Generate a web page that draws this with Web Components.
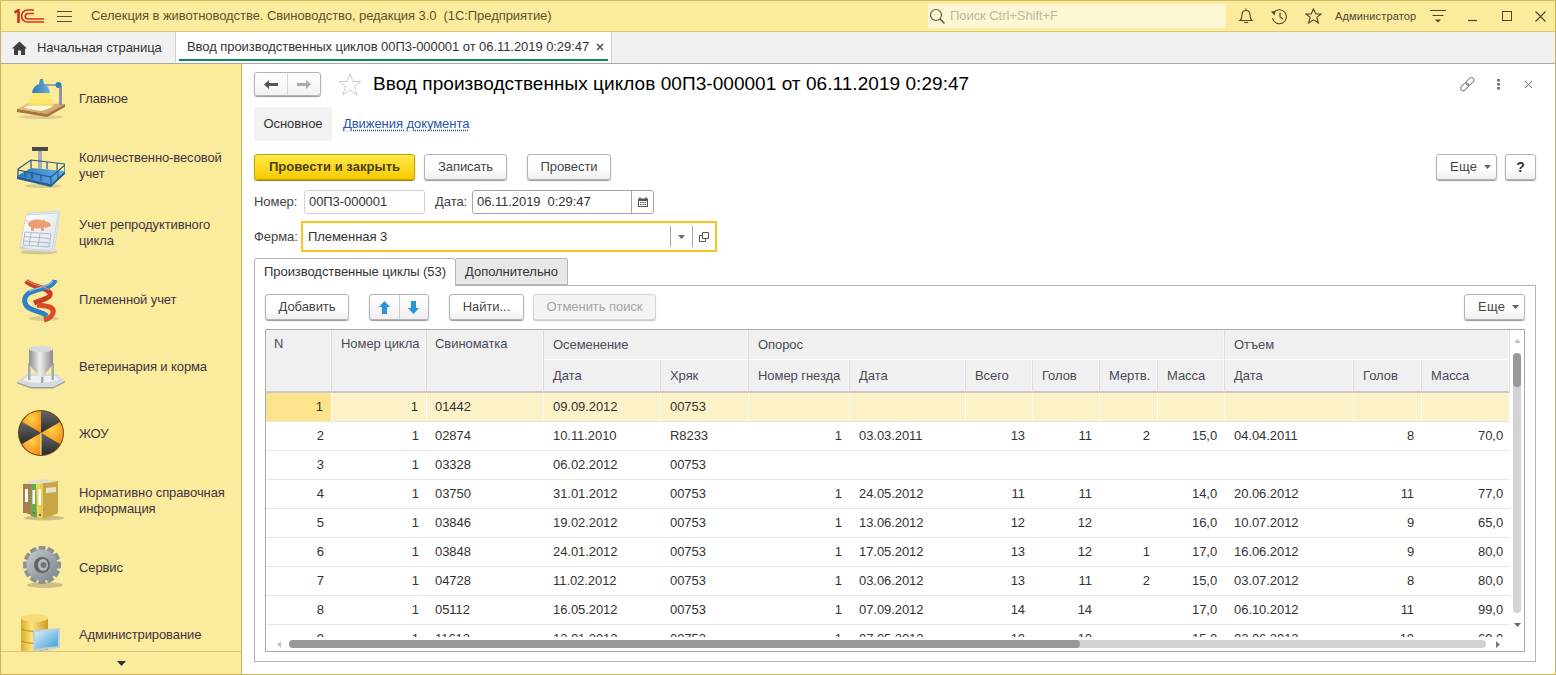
<!DOCTYPE html>
<html lang="ru"><head><meta charset="utf-8"><title>1С</title>
<style>
html,body{margin:0;padding:0;height:100%;overflow:hidden;background:#fff}
body{font:13px/16px "Liberation Sans",Arial,sans-serif;letter-spacing:-.06px;color:#333}
</style></head>
<body>
<onec-app>
  <onec-titlebar slot="top">Селекция в животноводстве. Свиноводство, редакция 3.0  (1С:Предприятие)</onec-titlebar>
  <onec-tabbar slot="top"></onec-tabbar>
  <onec-sidebar slot="side">
    <onec-nav pic="lamp">Главное</onec-nav>
    <onec-nav pic="scale">Количественно-весовой учет</onec-nav>
    <onec-nav pic="doc">Учет репродуктивного цикла</onec-nav>
    <onec-nav pic="dna">Племенной учет</onec-nav>
    <onec-nav pic="silo">Ветеринария и корма</onec-nav>
    <onec-nav pic="hazard">ЖОУ</onec-nav>
    <onec-nav pic="folders">Нормативно справочная информация</onec-nav>
    <onec-nav pic="gear">Сервис</onec-nav>
    <onec-nav pic="db">Администрирование</onec-nav>
  </onec-sidebar>
  <onec-form slot="main"></onec-form>
</onec-app>
<script>
const def=(name,css,html,init)=>customElements.define(name,class extends HTMLElement{
  constructor(){super();const r=this.attachShadow({mode:'open'});r.innerHTML=`<style>${css}</style>${typeof html==='function'?html(this):html}`;}
  connectedCallback(){if(init)init(this);}
});
const PICS={
lamp:`<defs><linearGradient id="a" x1="0" y1="0" x2="1" y2="1"><stop offset="0" stop-color="#e9c48f"/><stop offset="1" stop-color="#c99a60"/></linearGradient><linearGradient id="b" x1="0" x2="1"><stop offset="0" stop-color="#2f78b4"/><stop offset="1" stop-color="#6fb0dc"/></linearGradient></defs>
<ellipse cx="24" cy="42" rx="22" ry="2" fill="#cfc28a" opacity=".7"/><path d="M0 34L11 28L48 29L30 39Z" fill="url(#a)"/><path d="M0 34L30 39L48 29V32L30 42L0 37Z" fill="#a5743f"/><path d="M10 31L32 30.500L36 32L24 36L7 33Z" fill="#fff6dc"/><path d="M16 18H32L37 31H10Z" fill="#ffe761" opacity=".75"/><path d="M27 9H41V11H27Z" fill="#9ba3a8"/><path d="M42 11H45V30H42Z" fill="#8d969c"/><circle cx="41.500" cy="10" r="3" fill="#2f7fb8"/><path d="M15 18Q16 11 22 9L23 4H26L27 9Q32 11 33 18Z" fill="url(#b)"/>`,
scale:`<defs><linearGradient id="c" x1="0" x2="1"><stop offset="0" stop-color="#2a75c0"/><stop offset="1" stop-color="#62aee5"/></linearGradient></defs>
<ellipse cx="26" cy="44" rx="18" ry="2" fill="#d7cb90"/><path d="M15 5H31V9H15Z" fill="#4a4a4a"/><path d="M21 9H25V30H21Z" fill="#aab0b4"/><path d="M0 34L14 26L48 29L34 42Z" fill="url(#c)"/><path d="M0 34L34 42L48 29V32L34 45L0 37Z" fill="#1e5f9e"/><g fill="none" stroke="#27578c" stroke-width="1.200"><path d="M1 34V27L14 18L48 22V29"/><path d="M1 28L34 35L48 23"/><path d="M34 35V42M8 29V35M15 30V37M24 33V39M41 30V36M14 18V26M30 20V27M40 21V28"/></g>`,
doc:`<defs><linearGradient id="d" x1="0" y1="0" x2="1" y2="1"><stop offset="0" stop-color="#fff"/><stop offset="1" stop-color="#dbe2e8"/></linearGradient></defs>
<ellipse cx="22" cy="43" rx="18" ry="2.500" fill="#d3c68b"/><path d="M11 4L43 2L37 43L5 41Z" fill="#e3e9ee" stroke="#c4ced6" stroke-width=".6"/><path d="M9 6L41 4L35 42L3 39Z" fill="url(#d)" stroke="#bcc8d1" stroke-width=".6"/><g fill="#ee9e73"><ellipse cx="20" cy="15" rx="9" ry="4.500"/><path d="M26 10L28 12L33 14L34 17L29 19L25 17Z"/><path d="M14 17H17V22H14ZM24 17H27V22H24Z"/><path d="M11 12L9 10.500L10 13.500Z"/></g><g stroke="#9fb0bd" stroke-width=".8" fill="none"><path d="M8 23L34 25L32 38L6 36ZM7 27.500L33 29.500M6.500 32L32 34M14 24L12 37M23 24.500L21 37.500"/></g><path d="M3 39L9 34L8 41Z" fill="#cdd6dd"/>`,
dna:`<ellipse cx="27" cy="42.500" rx="15" ry="2.500" fill="#d7cb90"/><g fill="none"><path d="M15 9L30 7M12 14L33 14M13 26L32 24M15 31L34 30M20 36L33 36" stroke="#f3e4a2" stroke-width="2"/><path d="M9 5C16 12 28 10 33 17C35 22 24 24 17 27" stroke="#c93c25" stroke-width="5"/><path d="M38 4C36 12 22 12 12 17C5 22 7 30 14 33C20 36 26 36 30 40" stroke="#2f80c6" stroke-width="5"/><path d="M20 29C28 30 38 30 36 37C35 41 31 43 27 44" stroke="#dc4a26" stroke-width="5"/><path d="M36 5C33 11 20 11 12 15.500" stroke="#86c1ec" stroke-width="1.200"/><path d="M10 4.500C16 10 26 9 32 14" stroke="#ea8a62" stroke-width="1"/></g>`,
silo:`<defs><linearGradient id="e" x1="0" x2="1"><stop offset="0" stop-color="#8d8d8d"/><stop offset=".45" stop-color="#efefef"/><stop offset="1" stop-color="#8a8a8a"/></linearGradient></defs>
<path d="M0 39L10 31H40L48 38L36 44H14Z" fill="#d6dadc"/><path d="M0 39L14 44H36L48 38V39.500L36 45.500H14L0 40.500Z" fill="#9aa1a5"/><path d="M6 38Q24 42 42 37L38 33H10Z" fill="#eef0f1"/><path d="M11 20H13.500V37H11ZM34.500 20H37V37H34.500ZM24 30H26.500V40H24Z" fill="#a5abaf"/><path d="M12 21H36L26 34H22Z" fill="url(#e)"/><path d="M12 6V21Q24 24 36 21V6Z" fill="url(#e)"/><ellipse cx="24" cy="6" rx="12" ry="3.200" fill="#d9d9d9"/><path d="M12 21L20 27M36 21L28 27" stroke="#a5abaf" stroke-width=".8"/>`,
hazard:`<defs><radialGradient id="f" cx=".5" cy=".35" r=".7"><stop offset="0" stop-color="#ffd24d"/><stop offset="1" stop-color="#f58c13"/></radialGradient><linearGradient id="g" x1="0" y1="0" x2="0" y2="1"><stop offset="0" stop-color="#666"/><stop offset="1" stop-color="#2b2b2b"/></linearGradient></defs>
<circle cx="24" cy="23" r="23" fill="#6a4511"/><path d="M24 23V1A22 22 0 0 0 5 12Z" fill="url(#f)"/><path d="M24 23L43 34A22 22 0 0 1 24 45Z" fill="url(#g)"/><path d="M24 23V1A22 22 0 0 1 43 12Z" fill="url(#g)"/><path d="M24 23L43 12A22 22 0 0 1 43 34Z" fill="url(#f)"/><path d="M24 23L5 12A22 22 0 0 0 5 34Z" fill="url(#g)"/><path d="M24 23L5 34A22 22 0 0 0 24 45Z" fill="url(#f)"/><path d="M24 23V45" stroke="#ffedb0" stroke-width="1"/>`,
folders:`<defs><linearGradient id="h" x1="0" x2="1"><stop offset="0" stop-color="#f2d95a"/><stop offset="1" stop-color="#c9a93f"/></linearGradient></defs>
<ellipse cx="27" cy="41" rx="20" ry="2.500" fill="#cdbf83"/><path d="M6 7L14 5V38L9 36H6Z" fill="#a97d52"/><path d="M14 7L20 5V41L14 39Z" fill="#6aa84f"/><path d="M19 6L28 4H41V36L27 42L20 41Z" fill="url(#h)"/><path d="M6 7L13 4L28 2L41 4L28 6L20 7L14 7Z" fill="#e3e0c8"/><path d="M26 6H41V36L26 42Z" fill="#c7a648"/><path d="M8 12H11V25H8ZM15.500 13H18V27H15.500ZM21.500 12H24V28H21.500Z" fill="#fff"/><path d="M29 11L39 10V15L29 16Z" fill="#e8e4c0"/><path d="M22 37H24V39H22ZM16 35H18V37H16Z" fill="#7b6a1f"/>`,
gear:`<defs><linearGradient id="i" x1="0" y1="0" x2="1" y2="1"><stop offset="0" stop-color="#c5cace"/><stop offset="1" stop-color="#7c8388"/></linearGradient></defs>
<ellipse cx="28" cy="41" rx="18" ry="3" fill="#cdbf83"/><g transform="translate(25 21)"><g fill="#8b9296"><rect x="-3.500" y="-19" width="7" height="38" rx="1"/><rect x="-3.500" y="-19" width="7" height="38" rx="1" transform="rotate(30)"/><rect x="-3.500" y="-19" width="7" height="38" rx="1" transform="rotate(60)"/><rect x="-3.500" y="-19" width="7" height="38" rx="1" transform="rotate(90)"/><rect x="-3.500" y="-19" width="7" height="38" rx="1" transform="rotate(120)"/><rect x="-3.500" y="-19" width="7" height="38" rx="1" transform="rotate(150)"/></g><circle r="15.500" fill="url(#i)"/><circle r="8" fill="#5e6468"/><ellipse cx="1" cy="0" rx="5" ry="6" fill="#b6bcc0"/><circle cx="1.500" r="3" fill="#70777c"/></g>`,
db:`<defs><linearGradient id="j" x1="0" x2="1"><stop offset="0" stop-color="#d9ab2a"/><stop offset=".4" stop-color="#fbe57a"/><stop offset="1" stop-color="#c9982a"/></linearGradient><linearGradient id="k" x1="0" y1="0" x2="1" y2="1"><stop offset="0" stop-color="#d8f0fb"/><stop offset="1" stop-color="#3b9fd6"/></linearGradient></defs>
<path d="M4 7V42H31V7Z" fill="url(#j)"/><ellipse cx="17.500" cy="7" rx="13.500" ry="4" fill="#f5dc77"/><path d="M4 18Q17 23 31 18M4 30Q17 35 31 30" fill="none" stroke="#b58b25" stroke-width="1"/><path d="M16 19L43 17V37L16 40Z" fill="#c5ced3"/><path d="M18 21L41 19V35L18 38Z" fill="url(#k)"/><path d="M26 39H34L37 44H23Z" fill="#cdd3d6"/>`
};
def('onec-app',`:host{display:flex;flex-direction:column;box-sizing:border-box;width:1556px;height:675px;border:1px solid #c9b659;border-top-color:#cdbb62}
.body{flex:1;display:flex;min-height:0}`,`<slot name="top"></slot><div class="body"><slot name="side"></slot><slot name="main"></slot></div>`);

const ic=(w,h,vb,body,st='')=>`<svg width="${w}" height="${h}" viewBox="${vb}" style="flex:none;display:block;${st}" aria-hidden="true">${body}</svg>`;

def('onec-titlebar',`:host{display:flex;align-items:center;height:31px;box-sizing:border-box;background:#fbeb9c;border-bottom:1px solid #d8c878;color:#5a5330;white-space:pre;flex:none}
.t{margin-left:19px;width:837px}
.s{display:flex;align-items:center;width:298px;height:24px;background:#fdf6d2;border-radius:2px;color:#bdb9a6;box-sizing:border-box;padding-left:1px;gap:4px}
.u{font-size:11px;letter-spacing:.15px;color:#4a4a3a;margin-left:13px;width:95px}`,
`${ic(30,14,'0 0 30 14',`<g fill="none" stroke="#d9301e"><path d="M.3 3.500L4.500 1.200V14" stroke-width="2.600"/><path d="M20 1H13.500A6 6 0 0 0 13.500 13H30" stroke-width="1.700"/><path d="M20 4.500H14A2.700 2.700 0 0 0 14 10H30" stroke-width="1.700"/></g>`,'margin-left:13px')}
${ic(15,13,'0 0 15 13',`<path d="M0 1.500H15M0 6.500H15M0 11.500H15" stroke="#55503a" stroke-width="1.200"/>`,'margin-left:13px')}
<span class="t"><slot></slot></span>
<div class="s">${ic(17,17,'0 0 17 17',`<circle cx="7" cy="7" r="5.500" fill="none" stroke="#5e5e50" stroke-width="1.200"/><path d="M11 11L15.500 15.500" stroke="#5e5e50" stroke-width="1.600"/>`)}<span>Поиск Ctrl+Shift+F</span></div>
${ic(16,16,'0 0 16 16',`<path d="M2 12.500Q4 11 4 7Q4 2.500 8 2.500Q12 2.500 12 7Q12 11 14 12.500ZM8 .5V2.500M6 14.500H10" fill="none" stroke="#4a4632" stroke-width="1.100"/>`,'margin-left:12px')}
${ic(18,17,'0 0 18 17',`<path d="M3.500 5A7 7 0 1 1 2.500 10" fill="none" stroke="#4a4632" stroke-width="1.100"/><path d="M1 3.500L5.500 3L4.500 7.500Z" fill="#4a4632"/><path d="M10 4.500V9L13 11" fill="none" stroke="#4a4632" stroke-width="1.200"/>`,'margin-left:16px')}
${ic(17,16,'0 0 17 16',`<path d="M8.500 1L10.800 6H16L11.800 9.400L13.400 15L8.500 11.800L3.600 15L5.200 9.400L1 6H6.200Z" fill="none" stroke="#4a4632" stroke-width="1.100"/>`,'margin-left:17px')}
<span class="u">Администратор</span>
${ic(16,16,'0 0 16 16',`<path d="M0 2.500H16M2.500 7.500H13.500" stroke="#4a4632" stroke-width="1.100"/><path d="M5 11.500H11L8 14.500Z" fill="#4a4632"/>`)}
${ic(10,10,'0 0 10 10',`<path d="M0 8.500H9" stroke="#4a4632" stroke-width="1.200"/>`,'margin-left:22px;margin-top:2px')}
${ic(10,10,'0 0 10 10',`<rect x=".5" y=".5" width="9" height="9" fill="none" stroke="#4a4632"/>`,'margin-left:24px')}
${ic(11,11,'0 0 11 11',`<path d="M.5 .5L10.500 10.500M10.500 .5L.5 10.500" stroke="#4a4632" stroke-width="1.100"/>`,'margin-left:23px')}`);

def('onec-tabbar',`:host{display:flex;flex:none;height:32px;box-sizing:border-box;background:#f0f0f0;border-bottom:1px solid #a9a9a9;color:#333;white-space:nowrap}
.h{width:175px;display:flex;align-items:center;border-right:1px solid #cfcfcf;box-sizing:border-box;padding-left:11px;gap:10px}
.a{width:436px;background:#fff;border-right:1px solid #cfcfcf;box-sizing:border-box;position:relative;display:flex;align-items:center;padding:0 0 2px 11px;justify-content:space-between}
.a::after{content:"";position:absolute;left:3px;right:3px;bottom:2px;height:2px;background:#0f8a4f}
.x{margin-right:7px;display:flex}`,
`<div class="h">${ic(15,14,'0 0 15 14',`<path d="M7.500 .5L15 7.500H13V14H9V9.500H6V14H2V7.500H0Z" fill="#3e3e3e"/>`)}<span>Начальная страница</span></div>
<div class="a"><span>Ввод производственных циклов 00П3-000001 от 06.11.2019 0:29:47</span><span class="x">${ic(8,8,'0 0 8 8',`<path d="M1 1L7 7M7 1L1 7" stroke="#555" stroke-width="1.600"/>`)}</span></div>`);

def('onec-sidebar',`:host{display:flex;flex-direction:column;width:241px;flex:none;box-sizing:border-box;background:#fbeb9c;border-right:1px solid #c9b659}
.l{flex:1;overflow:hidden;min-height:0;padding-top:1px}
.f{height:23px;flex:none;border-top:1px solid #d8c878;display:flex;align-items:center;justify-content:center;box-sizing:border-box}`,
`<div class="l"><slot></slot></div><div class="f">${ic(9,5,'0 0 9 5',`<path d="M0 0H9L4.500 5Z" fill="#333"/>`)}</div>`);

def('onec-nav',`:host{display:flex;align-items:center;height:67px;box-sizing:border-box;padding-left:16px;color:#3b3542;line-height:16px;letter-spacing:-.1px}
svg{flex:none;display:block}
span{margin-left:14px;width:155px}`,
h=>`<svg width="48" height="48" viewBox="0 0 48 48" aria-hidden="true">${PICS[h.getAttribute('pic')]}</svg><span><slot></slot></span>`);

def('onec-btn',`:host{display:inline-flex;align-items:center;justify-content:center;box-sizing:border-box;height:26px;border:1px solid #b4b4b4;border-radius:3px;background:linear-gradient(#fff,#fff 55%,#efefef);box-shadow:0 1px 1px #9a9a9a;color:#444;white-space:nowrap;flex:none}
:host([primary]){background:linear-gradient(#ffe94a,#f8cb00);border-color:#c5a400;box-shadow:0 1px 1px #8f7d10;color:#4a3f10;font-weight:bold;letter-spacing:.05px}
:host([off]){color:#a5a5a5;background:#f3f3f3;border-color:#d5d5d5;box-shadow:0 1px 1px #c4c4c4}`,`<slot></slot>`);

def('onec-more',`:host{display:inline-flex;flex:none}`,`<onec-btn style="width:61px;gap:7px;letter-spacing:.3px;justify-content:flex-start;padding-left:13px">Еще ${ic(7,4,'0 0 7 4',`<path d="M0 0H7L3.500 4Z" fill="#666"/>`)}</onec-btn>`);

def('onec-grid',`:host{display:grid;grid-template-columns:1244px 14px;grid-template-rows:1fr 14px;box-sizing:border-box;height:323px;border:1px solid #a9a9a9;flex:none;overflow:hidden;color:#333}
.v{overflow:hidden;min-height:0}
table{border-collapse:separate;border-spacing:0;table-layout:fixed;width:1244px}
th{background:#f0f0f0;font-weight:normal;text-align:left;color:#4b4b55;padding:0 0 0 9px;height:30px;vertical-align:middle;border-right:1px solid #dcdcdc;border-bottom:1px solid #fff;box-sizing:border-box;overflow:hidden;white-space:nowrap;box-shadow:inset -1px 0 0 #f8f8f8}
tr.s th{border-bottom:2px solid #c9c9c9;height:33px;}
th.top{vertical-align:top;padding-top:6px;border-bottom:2px solid #c9c9c9}
th.n{padding-left:8px}
td{height:29px;box-sizing:border-box;padding:0 8px;border-bottom:1px solid #e6e6e6;white-space:nowrap;overflow:hidden}
td.r{text-align:right}
td.m{padding-left:9px}
td.e{padding-right:7px}
tr.sel td{background:#fdf1c8;border-right:1px solid #fff;border-bottom:1px solid #e6e6e6}
tr.sel td:first-child{background:#fde38b}
.vs{display:flex;flex-direction:column;align-items:center;min-height:0}
.vs .tr{width:8px;flex:none;height:260px;background:#d3d3d3;border-radius:4px;margin:0}
.vs .th{height:34px;background:#999;border-radius:4px}
.hs{display:flex;align-items:flex-start;grid-column:1/3;padding-top:3px;box-sizing:border-box}
.hs .tr{width:1197px;height:8px;background:#d3d3d3;border-radius:4px;margin-left:8px}
.hs .th{width:791px;height:8px;background:#999;border-radius:4px}`,
()=>{
const W=[66,95,117,117,88,101,116,67,67,58,67,129,68,88];
const d=[['1','1','01442','09.09.2012','00753','','','','','','','','',''],
['2','1','02874','10.11.2010','R8233','1','03.03.2011','13','11','2','15,0','04.04.2011','8','70,0'],
['3','1','03328','06.02.2012','00753','','','','','','','','',''],
['4','1','03750','31.01.2012','00753','1','24.05.2012','11','11','','14,0','20.06.2012','11','77,0'],
['5','1','03846','19.02.2012','00753','1','13.06.2012','12','12','','16,0','10.07.2012','9','65,0'],
['6','1','03848','24.01.2012','00753','1','17.05.2012','13','12','1','17,0','16.06.2012','9','80,0'],
['7','1','04728','11.02.2012','00753','1','03.06.2012','13','11','2','15,0','03.07.2012','8','80,0'],
['8','1','05112','16.05.2012','00753','1','07.09.2012','14','14','','17,0','06.10.2012','11','99,0'],
['9','1','11613','13.01.2012','00753','1','07.05.2012','10','10','','15,0','02.06.2012','10','69,0']];
const L=new Set([2,3,4,6,11]);
const cls=j=>{const c=[];if(!L.has(j))c.push('r');if(L.has(j)&&j>2)c.push('m');if(j===13)c.push('e');return c.length?` class="${c.join(' ')}"`:'';};
return `<div class="v"><table><colgroup>${W.map(w=>`<col style="width:${w}px">`).join('')}</colgroup>
<thead><tr><th rowspan="2" class="top n">N</th><th rowspan="2" class="top">Номер цикла</th><th rowspan="2" class="top n">Свиноматка</th><th colspan="2">Осеменение</th><th colspan="6">Опорос</th><th colspan="3">Отъем</th></tr>
<tr class="s"><th>Дата</th><th>Хряк</th><th>Номер гнезда</th><th>Дата</th><th>Всего</th><th>Голов</th><th>Мертв.</th><th>Масса</th><th>Дата</th><th>Голов</th><th>Масса</th></tr></thead>
<tbody>${d.map((r,i)=>`<tr${i?'':' class="sel"'}>${r.map((c,j)=>`<td${cls(j)}>${c}</td>`).join('')}</tr>`).join('')}</tbody></table></div>
<div class="vs">${ic(7,4,'0 0 7 4',`<path d="M0 4H7L3.500 0Z" fill="#c4c4c4"/>`,'margin:9px 0 10px')}<div class="tr"><div class="th"></div></div>${ic(7,4,'0 0 7 4',`<path d="M0 0H7L3.500 4Z" fill="#666"/>`,'margin-top:10px')}</div>
<div class="hs">${ic(4,7,'0 0 4 7',`<path d="M4 0V7L0 3.500Z" fill="#c4c4c4"/>`,'margin:1px 0 0 11px')}<div class="tr"><div class="th"></div></div>${ic(4,7,'0 0 4 7',`<path d="M0 0V7L4 3.500Z" fill="#777"/>`,'margin:1px 0 0 10px')}</div>`;});

def('onec-form',`:host{display:block;flex:1;min-width:0;box-sizing:border-box;padding:8px 19px 0 12px;background:#fff;color:#444}
.row{display:flex;align-items:center}
.nav{display:flex;width:67px;height:24px;box-sizing:border-box;border:1px solid #b4b4b4;border-radius:3px;background:linear-gradient(#fff,#f2f2f2);box-shadow:0 1px 1px #9a9a9a;flex:none}
.nav div{flex:1;display:flex;align-items:center;justify-content:center}
.nav div+div{border-left:1px solid #d8d8d8}
h1{font:normal 19px/26px "Liberation Sans",Arial,sans-serif;letter-spacing:.05px;color:#000;margin:0 0 0 11px;white-space:nowrap;flex:1}
.sub{height:34px;margin-top:11px}
.o{height:34px;width:78px;background:#f2f2f2;border-radius:3px;display:flex;align-items:center;justify-content:center;color:#333}
.lnk{margin-left:11px;color:#2a55a5;text-decoration:underline dotted #2a55a5;text-underline-offset:2px}
.f{box-sizing:border-box;height:24px;border:1px solid #d2d2d2;border-radius:3px;padding-left:4px;display:flex;align-items:center;color:#333;white-space:pre}
.tabs{height:28px;margin-top:6px;display:flex;align-items:stretch;position:relative;z-index:1}
.t1{width:202px;box-sizing:border-box;border:1px solid #b4b4b4;border-bottom:0;padding-bottom:1px;background:#fff;border-radius:3px 3px 0 0;display:flex;align-items:center;justify-content:center;color:#333}
.t2{width:112px;box-sizing:border-box;border:1px solid #b4b4b4;border-left:0;background:#e8e8e8;border-radius:0 3px 0 0;display:flex;align-items:center;justify-content:center;color:#333;height:27px}
.panel{border:1px solid #b4b4b4;height:377px;box-sizing:border-box;margin-top:-1px;padding:8px 10px 0}
.up{display:flex;width:60px;height:26px;box-sizing:border-box;border:1px solid #b4b4b4;border-radius:3px;background:linear-gradient(#fff,#f0f0f0);box-shadow:0 1px 1px #9a9a9a;margin-left:20px;flex:none}
.up div{flex:1;display:flex;align-items:center;justify-content:center}
.up div+div{border-left:1px solid #cfcfcf}`,
`<div class="row" style="height:24px"><div class="nav"><div>${ic(14,9,'0 0 14 9',`<path d="M5 0V3H14V6H5V9L0 4.500Z" fill="#555"/>`)}</div><div>${ic(14,9,'0 0 14 9',`<path d="M9 0V3H0V6H9V9L14 4.500Z" fill="#aaa"/>`)}</div></div>
${ic(24,23,'0 0 24 23',`<path d="M12 1L15 8.500H23L16.500 13.500L19 22L12 17L5 22L7.500 13.500L1 8.500H9Z" fill="#fff" stroke="#c3d0d3" stroke-width="1"/>`,'margin-left:17px')}
<h1>Ввод производственных циклов 00П3-000001 от 06.11.2019 0:29:47</h1>
${ic(15,16,'0 0 15 16',`<g fill="none" stroke="#8a8a8a" stroke-width="1.100" transform="rotate(-45 7.500 8)"><rect x="-1" y="5.500" width="9" height="5" rx="2.500"/><rect x="6.500" y="5.500" width="9" height="5" rx="2.500"/></g>`)}
${ic(3,11,'0 0 3 11',`<path d="M0 0H3V2.500H0ZM0 4H3V6.500H0ZM0 8H3V10.500H0Z" fill="#777"/>`,'margin-left:22px')}
${ic(9,9,'0 0 9 9',`<path d="M1 1L8 8M8 1L1 8" stroke="#777" stroke-width="1"/>`,'margin:0 3px 0 24px')}</div>
<div class="row sub"><div class="o">Основное</div><span class="lnk">Движения документа</span></div>
<div class="row" style="margin-top:13px;height:26px"><onec-btn primary style="width:161px">Провести и закрыть</onec-btn><onec-btn style="width:83px;margin-left:9px">Записать</onec-btn><onec-btn style="width:84px;margin-left:20px">Провести</onec-btn><span style="flex:1"></span><onec-more></onec-more><onec-btn style="width:31px;margin-left:8px;font-size:14px;font-weight:bold;color:#333">?</onec-btn></div>
<div class="row" style="margin-top:10px;height:24px"><span style="width:50px">Номер:</span><div class="f" style="width:121px">00П3-000001</div><span style="margin-left:10px;width:37px">Дата:</span><div class="f" style="width:182px;border-color:#a5a5a5;padding:0 0 0 4px;position:relative">06.11.2019  0:29:47<span style="flex:1"></span><span style="width:21px;height:22px;border-left:1px solid #a5a5a5;display:flex;align-items:center;justify-content:center">${ic(10,10,'0 0 10 10',`<path d="M0 1.500H10V10H0Z" fill="#555"/><path d="M2 0V2M8 0V2" stroke="#555"/><path d="M1 4H9V9H1Z" fill="#fff"/><path d="M2 5H3.500V6H2ZM4.250 5H5.750V6H4.250ZM6.500 5H8V6H6.500ZM2 7H3.500V8H2ZM4.250 7H5.750V8H4.250ZM6.500 7H8V8H6.500Z" fill="#555"/>`)}</span></div></div>
<div class="row" style="margin-top:7px;height:31px"><span style="width:47px">Ферма:</span><div class="f" style="width:416px;height:31px;border:2px solid #f7c41f;border-radius:0;padding:0 0 0 5px">Племенная 3<span style="flex:1"></span><span style="width:21px;height:21px;border-left:1px solid #a5a5a5;display:flex;align-items:center;justify-content:center">${ic(7,4,'0 0 7 4',`<path d="M0 0H7L3.500 4Z" fill="#666"/>`)}</span><span style="width:22px;height:21px;border-left:1px solid #a5a5a5;display:flex;align-items:center;justify-content:center">${ic(10,10,'0 0 10 10',`<path d="M3.500 .5H9.500V6.500H3.500ZM3.500 3.500H.5V9.500H6.500V6.500" fill="none" stroke="#555"/>`)}</span></div></div>
<div class="tabs"><div class="t1">Производственные циклы (53)</div><div class="t2">Дополнительно</div></div>
<div class="panel"><div class="row" style="height:26px"><onec-btn style="width:84px">Добавить</onec-btn><div class="up"><div>${ic(11,13,'0 0 11 13',`<path d="M5.500 0L11 6H8V13H3V6H0Z" fill="#2796d4"/>`)}</div><div>${ic(11,13,'0 0 11 13',`<path d="M5.500 13L11 7H8V0H3V7H0Z" fill="#2796d4"/>`)}</div></div><onec-btn style="width:75px;margin-left:20px">Найти...</onec-btn><onec-btn off style="width:123px;margin-left:9px">Отменить поиск</onec-btn><span style="flex:1"></span><onec-more></onec-more></div><onec-grid style="margin-top:9px"></onec-grid></div>`);
</script>
</body></html>
